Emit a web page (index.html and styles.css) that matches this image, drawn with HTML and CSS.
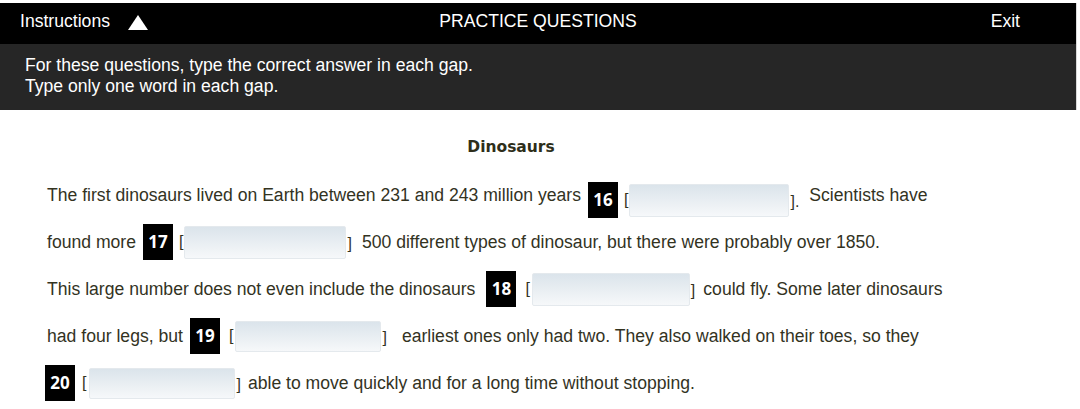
FILE: index.html
```html
<!DOCTYPE html>
<html lang="en">
<head>
<meta charset="utf-8">
<title>Practice Questions</title>
<link rel="stylesheet" href="styles.css">
</head>
<body>
<div class="frame">
  <header class="topbar">
    <div class="topbar-left">
      <span>Instructions</span>
      <svg class="caret" width="20" height="15" viewBox="0 0 20 15"><polygon points="10,0 20,15 0,15" fill="#fff"/></svg>
    </div>
    <div class="topbar-title">PRACTICE QUESTIONS</div>
    <div class="topbar-right">Exit</div>
  </header>
  <section class="instructions">
    <p>For these questions, type the correct answer in each gap.</p>
    <p>Type only one word in each gap.</p>
  </section>
</div>
<main class="content">
  <h1 class="title">Dinosaurs</h1>
  <div class="row row-first">
    <span>The first dinosaurs lived on Earth between 231 and 243 million years</span>
    <span class="num">16</span>
    <span class="br open">[</span>
    <input class="gap w160" type="text" aria-label="Question 16">
    <span class="br close">].</span>
    <span class="after">Scientists have</span>
  </div>
  <div class="row">
    <span>found more</span>
    <span class="num">17</span>
    <span class="br open">[</span>
    <input class="gap w162" type="text" aria-label="Question 17">
    <span class="br close">]</span>
    <span class="after">500 different types of dinosaur, but there were probably over 1850.</span>
  </div>
  <div class="row">
    <span>This large number does not even include the dinosaurs</span>
    <span class="num n-wide">18</span>
    <span class="br open wide">[</span>
    <input class="gap w158" type="text" aria-label="Question 18">
    <span class="br close">]</span>
    <span class="after narrow">could fly. Some later dinosaurs</span>
  </div>
  <div class="row">
    <span>had four legs, but</span>
    <span class="num">19</span>
    <span class="br open wide">[</span>
    <input class="gap w146" type="text" aria-label="Question 19">
    <span class="br close">]</span>
    <span class="after wide">earliest ones only had two. They also walked on their toes, so they</span>
  </div>
  <div class="row row-last">
    <span class="num n-start">20</span>
    <span class="br open loose">[</span>
    <input class="gap w146" type="text" aria-label="Question 20">
    <span class="br close">]</span>
    <span class="after tight">able to move quickly and for a long time without stopping.</span>
  </div>
</main>
</body>
</html>
```
FILE: styles.css
```css
html, body {
  margin: 0;
  padding: 0;
  background: #fff;
}
body {
  font-family: "Liberation Sans", Arial, sans-serif;
  font-size: 17.6px;
  color: #33331f;
  padding-top: 3px;
}
.frame {
  margin-right: 3px;
  border-right: 1px solid #d8d8d8;
}
.topbar {
  height: 41px;
  background: #000;
  color: #fff;
  display: grid;
  grid-template-columns: 1fr auto 1fr;
  align-items: center;
  padding: 0 20px 4px;
  box-sizing: border-box;
}
.topbar-left {
  display: flex;
  align-items: center;
  gap: 18px;
}
.caret {
  display: block;
  margin-top: 1px;
}
.topbar-title {
  text-align: center;
}
.topbar-right {
  text-align: right;
  padding-right: 36px;
}
.instructions {
  background: #262626;
  color: #fff;
  height: 66px;
  box-sizing: border-box;
  padding: 11px 25px 0;
}
.instructions p {
  margin: 0;
  line-height: 21px;
}
.content {
  width: 928px;
  padding: 0 0 0 47px;
}
.title {
  margin: 27px 0 14px;
  font-family: "DejaVu Sans", Verdana, sans-serif;
  font-weight: bold;
  font-size: 15.5px;
  line-height: 20px;
  text-align: center;
  color: #2e2e1a;
}
.row {
  height: 47px;
  display: flex;
  align-items: center;
  white-space: nowrap;
  line-height: 20px;
}
.num {
  display: inline-flex;
  align-items: center;
  justify-content: center;
  width: 30px;
  height: 36px;
  background: #000;
  color: #fff;
  font-family: "Open Sans", "DejaVu Sans", sans-serif;
  font-weight: bold;
  font-size: 17px;
  margin-left: 7px;
  margin-top: 1px;
}
.n-wide { margin-left: 11px; }
.n-start { margin-left: -2px; }
.row-first .num,
.row-first .br,
.row-first .gap {
  position: relative;
  top: 5px;
}
.br {
  display: inline-block;
  color: #33331f;
  font-size: 16px;
}
.br.open { margin-left: 6px; margin-right: 1px; }
.br.open.wide { margin-left: 9px; margin-right: 2px; }
.br.open.loose { margin-left: 7px; margin-right: 3px; }
.br.close { margin-left: 1px; margin-top: 4px; }
.after { margin-left: 10px; }
.after.narrow { margin-left: 8px; }
.after.wide { margin-left: 15px; }
.after.tight { margin-left: 7px; }
.gap {
  box-sizing: border-box;
  height: 33px;
  border: 1px solid #e4e9ed;
  border-radius: 2px;
  background: linear-gradient(to bottom, #dbe4eb 0%, #eef2f5 70%, #f6f8fa 100%);
  margin: 2px 0 0;
  padding: 0 6px;
  font-family: "Liberation Sans", Arial, sans-serif;
  font-size: 16px;
  outline: none;
}
.w160 { width: 160px; }
.w162 { width: 162px; }
.w158 { width: 158px; }
.w146 { width: 146px; height: 31px; }
```
